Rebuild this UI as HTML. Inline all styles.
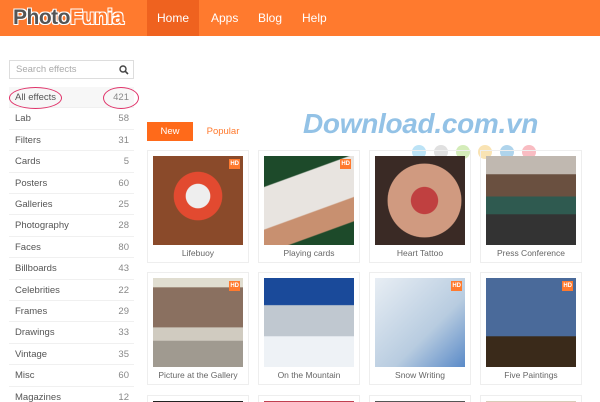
<!DOCTYPE html>
<html><head><meta charset="utf-8"><style>
*{margin:0;padding:0;box-sizing:border-box}
html{width:600px;height:402px;overflow:hidden}
body{width:600px;height:402px;overflow:hidden;background:#fff;font-family:"Liberation Sans",sans-serif;position:relative}
.hdr{position:absolute;left:0;top:0;width:600px;height:36px;background:#ff7a2e}
.logo{position:absolute;left:13px;top:6px;font-weight:bold;font-size:21px;letter-spacing:-0.5px;color:#555;text-shadow:0 0 1px #fff,1px 1px 0 #fff,-1px -1px 0 #fff,1px -1px 0 #fff,-1px 1px 0 #fff}
.logo span{color:#ff7a2e}
.nav a{position:absolute;top:0;height:36px;line-height:36px;color:#fff;font-size:12px;text-decoration:none}
.home{left:147px;width:52px;background:#ef621f;text-align:center}
.search{position:absolute;left:9px;top:60px;width:125px;height:19px;border:1px solid #ddd;font-size:9.5px;color:#aaa;padding:3px 6px}
.cat{position:absolute;left:9px;width:125px;height:21.4px;border-bottom:1px solid #f0f0f0;font-size:9.5px;color:#555;line-height:21px;padding:0 5px 0 6px}
.cat b{font-weight:normal;float:right;color:#888}
.ell{position:absolute;border:1.5px solid #e0336a;border-radius:50%}
.tab{position:absolute;top:122px;height:19px;font-size:9.5px;line-height:19px;text-align:center}
.card{position:absolute;width:102px;height:113px;border:1px solid #eee}
.card .im{position:absolute;left:5px;top:5px;width:90px;height:89px}
.card .cap{position:absolute;left:0;right:0;top:97px;text-align:center;font-size:8.5px;color:#666}
.hd{position:absolute;right:3px;top:3px;background:#ff7a2e;color:#fff;font-size:6px;font-weight:bold;padding:2px 1px}
.wm{position:absolute;left:303px;top:108px;font-size:28px;font-weight:bold;font-style:italic;color:#93c2e6;letter-spacing:-0.3px}
.dot{position:absolute;top:145px;width:14px;height:14px;border-radius:50%;opacity:.6}
</style></head><body>
<div class="hdr"><div class="logo">Photo<span>Funia</span></div>
<div class="nav"><a class="home">Home</a><a style="left:211px">Apps</a><a style="left:258px">Blog</a><a style="left:302px">Help</a></div></div>
<div class="search">Search effects<svg style="position:absolute;right:4px;top:4px" width="10" height="10" viewBox="0 0 10 10"><circle cx="4" cy="4" r="3" fill="none" stroke="#444" stroke-width="1.4"/><path d="M6.2 6.2L9 9" stroke="#444" stroke-width="1.6"/></svg></div>
<div class="cat" style="top:87px;background:#f7f7f7">All effects<b>421</b></div>
<div class="cat" style="top:108.4px">Lab<b>58</b></div>
<div class="cat" style="top:129.8px">Filters<b>31</b></div>
<div class="cat" style="top:151.2px">Cards<b>5</b></div>
<div class="cat" style="top:172.6px">Posters<b>60</b></div>
<div class="cat" style="top:194px">Galleries<b>25</b></div>
<div class="cat" style="top:215.4px">Photography<b>28</b></div>
<div class="cat" style="top:236.8px">Faces<b>80</b></div>
<div class="cat" style="top:258.2px">Billboards<b>43</b></div>
<div class="cat" style="top:279.6px">Celebrities<b>22</b></div>
<div class="cat" style="top:301px">Frames<b>29</b></div>
<div class="cat" style="top:322.4px">Drawings<b>33</b></div>
<div class="cat" style="top:343.8px">Vintage<b>35</b></div>
<div class="cat" style="top:365.2px">Misc<b>60</b></div>
<div class="cat" style="top:386.6px">Magazines<b>12</b></div>
<div class="ell" style="left:9px;top:87px;width:53px;height:22px"></div>
<div class="ell" style="left:103px;top:87px;width:36px;height:22px"></div>
<div class="tab" style="left:147px;width:46px;background:#ff6a1a;color:#fff">New</div>
<div class="tab" style="left:203px;width:40px;color:#ff7a2e">Popular</div>
<div class="wm">Download.com.vn</div>
<div class="dot" style="left:412px;background:#8fd0f0"></div><div class="dot" style="left:434px;background:#ccc"></div><div class="dot" style="left:456px;background:#b8e08a"></div><div class="dot" style="left:478px;background:#f5d080"></div><div class="dot" style="left:500px;background:#7ab8e0"></div><div class="dot" style="left:522px;background:#f5909a"></div>

<div class="card" style="left:147px;top:150px"><div class="im" style="background:radial-gradient(circle at 50% 45%,#eee 0 18%,#e24a30 19% 36%,#8a4a2a 37%)"><div class="hd">HD</div></div><div class="cap">Lifebuoy</div></div>
<div class="card" style="left:258px;top:150px"><div class="im" style="background:linear-gradient(160deg,#1d4a2a 0 25%,#e8e4e0 26% 60%,#c89070 61% 80%,#1d4a2a 81%)"><div class="hd">HD</div></div><div class="cap">Playing cards</div></div>
<div class="card" style="left:369px;top:150px"><div class="im" style="background:radial-gradient(circle at 55% 50%,#c04040 0 20%,#d09a80 21% 55%,#3a2a25 56%)"></div><div class="cap">Heart Tattoo</div></div>
<div class="card" style="left:480px;top:150px"><div class="im" style="background:linear-gradient(180deg,#c0b8b0 0 20%,#6a5040 21% 45%,#2f5a50 46% 65%,#333 66%)"></div><div class="cap">Press Conference</div></div>

<div class="card" style="left:147px;top:272px"><div class="im" style="background:linear-gradient(180deg,#e0ddd0 0 10%,#8a7060 11% 55%,#d0cbc0 56% 70%,#a09a90 71%)"><div class="hd">HD</div></div><div class="cap">Picture at the Gallery</div></div>
<div class="card" style="left:258px;top:272px"><div class="im" style="background:linear-gradient(180deg,#1a4a9a 0 30%,#c0c8d0 31% 65%,#eef2f6 66%)"></div><div class="cap">On the Mountain</div></div>
<div class="card" style="left:369px;top:272px"><div class="im" style="background:linear-gradient(135deg,#e8eef4,#b8cce0 60%,#5a8ac8)"><div class="hd">HD</div></div><div class="cap">Snow Writing</div></div>
<div class="card" style="left:480px;top:272px"><div class="im" style="background:linear-gradient(180deg,#4a6a9a 0 65%,#3a2a1a 66%)"><div class="hd">HD</div></div><div class="cap">Five Paintings</div></div>

<div class="card" style="left:147px;top:395px"><div class="im" style="background:#222"></div></div>
<div class="card" style="left:258px;top:395px"><div class="im" style="background:#c04050"></div></div>
<div class="card" style="left:369px;top:395px"><div class="im" style="background:#555"></div></div>
<div class="card" style="left:480px;top:395px"><div class="im" style="background:#d8ccb8"></div></div>
</body></html>
